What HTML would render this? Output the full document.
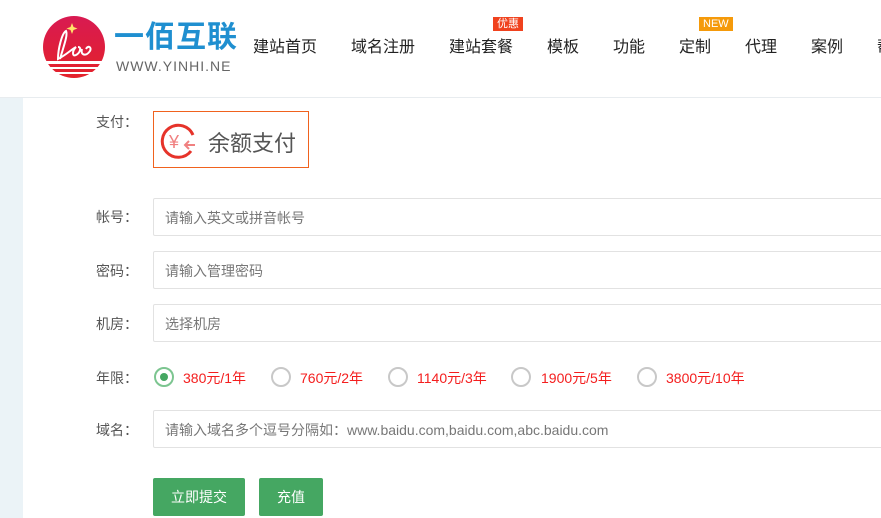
<!DOCTYPE html>
<html><head><meta charset="utf-8"><style>
*{margin:0;padding:0;box-sizing:border-box}
body{width:881px;height:518px;overflow:hidden;background:#fff;font-family:"Liberation Sans","Noto Sans CJK SC",sans-serif;position:relative}
.hd{position:absolute;left:0;top:0;width:881px;height:98px;border-bottom:1px solid #e8ecef;background:#fff}
.nav{position:absolute;top:33px;font-size:16px;color:#222;white-space:nowrap}
.tag{position:absolute;font-size:11px;color:#fff;padding:0 4px;line-height:14px;height:14px}
.strip{position:absolute;left:0;top:98px;width:23px;height:420px;background:#ebf3f7}
.lab{position:absolute;left:96px;font-size:14px;color:#555}
.inp{position:absolute;left:153px;width:740px;height:38px;border:1px solid #e2e2e2;border-radius:2px;font-size:14px;color:#777;padding:9px 11px}
.r{position:absolute;top:367px;width:20px;height:20px;border:2px solid #c8c8c8;border-radius:50%}
.rt{position:absolute;top:368px;font-size:14px;color:#f41e1e}
.btn{position:absolute;top:478px;height:38px;background:#45a762;color:#fff;font-size:14px;text-align:center;line-height:38px;border-radius:2px}
</style></head><body>
<div class="hd">
<svg style="position:absolute;left:42px;top:15px" width="64" height="64" viewBox="0 0 64 64">
<defs><linearGradient id="g" x1="0" y1="0" x2="0" y2="1"><stop offset="0" stop-color="#d81a52"/><stop offset="1" stop-color="#e4222a"/></linearGradient></defs>
<circle cx="32" cy="32" r="31" fill="url(#g)"/>
<rect x="2" y="46" width="60" height="3" fill="#fff"/><rect x="5" y="52" width="54" height="2" fill="#fff"/><rect x="10" y="57" width="44" height="2" fill="#fff"/>
<path d="M18 44 C22 30 26 20 24 16 C20 18 16 34 16 44 C24 40 30 34 34 32 C30 36 30 42 34 40 C38 38 40 32 36 32 M40 34 C38 40 44 42 48 36 C50 32 46 30 44 34" stroke="#fff" stroke-width="2" fill="none"/>
<path d="M30 8 l1.5 4 4 1.5 -4 1.5 -1.5 4 -1.5 -4 -4 -1.5 4 -1.5z" fill="#ffe36a"/>
</svg>
<div style="position:absolute;left:114px;top:21px;font-size:30px;font-weight:bold;color:#1f8fd0;letter-spacing:1px;line-height:34px">一佰互联</div>
<div style="position:absolute;left:116px;top:58px;font-size:14px;color:#666;letter-spacing:1px;line-height:16px">WWW.YINHI.NE</div>
<div class="nav" style="left:253px">建站首页</div>
<div class="nav" style="left:351px">域名注册</div>
<div class="nav" style="left:449px">建站套餐</div>
<div class="tag" style="left:493px;top:17px;background:#f0421e">优惠</div>
<div class="nav" style="left:547px">模板</div>
<div class="nav" style="left:613px">功能</div>
<div class="nav" style="left:679px">定制</div>
<div class="tag" style="left:699px;top:17px;background:#f59a0a">NEW</div>
<div class="nav" style="left:745px">代理</div>
<div class="nav" style="left:811px">案例</div>
<div class="nav" style="left:877px">帮</div>
</div>
<div class="strip"></div>
<div class="lab" style="top:112px">支付：</div>
<div style="position:absolute;left:153px;top:111px;width:156px;height:57px;border:1px solid #f0621e"></div>
<svg style="position:absolute;left:159px;top:121px" width="40" height="40" viewBox="0 0 40 40">
<path d="M32 30 A16 16 0 1 1 34 14" stroke="#e6332a" stroke-width="3" fill="none"/>
<text x="10" y="27" font-size="18" fill="#f08080" font-family="Liberation Sans">¥</text>
<path d="M36 24 h-10 m4 -4 l-4 4 4 4" stroke="#f08080" stroke-width="2" fill="none"/>
</svg>
<div style="position:absolute;left:208px;top:126px;font-size:22px;color:#555">余额支付</div>
<div class="lab" style="top:207px">帐号：</div>
<div class="inp" style="top:198px">请输入英文或拼音帐号</div>
<div class="lab" style="top:261px">密码：</div>
<div class="inp" style="top:251px">请输入管理密码</div>
<div class="lab" style="top:314px">机房：</div>
<div class="inp" style="top:304px">选择机房</div>
<div class="lab" style="top:368px">年限：</div>
<div class="r" style="left:154px;border-color:#7cc590"><div style="width:8px;height:8px;background:#45a762;border-radius:50%;margin:4px"></div></div>
<div class="rt" style="left:183px">380元/1年</div>
<div class="r" style="left:271px"></div><div class="rt" style="left:300px">760元/2年</div>
<div class="r" style="left:388px"></div><div class="rt" style="left:417px">1140元/3年</div>
<div class="r" style="left:511px"></div><div class="rt" style="left:541px">1900元/5年</div>
<div class="r" style="left:637px"></div><div class="rt" style="left:666px">3800元/10年</div>
<div class="lab" style="top:420px">域名：</div>
<div class="inp" style="top:410px">请输入域名多个逗号分隔如：www.baidu.com,baidu.com,abc.baidu.com</div>
<div class="btn" style="left:153px;width:92px">立即提交</div>
<div class="btn" style="left:259px;width:64px">充值</div>
</body></html>
